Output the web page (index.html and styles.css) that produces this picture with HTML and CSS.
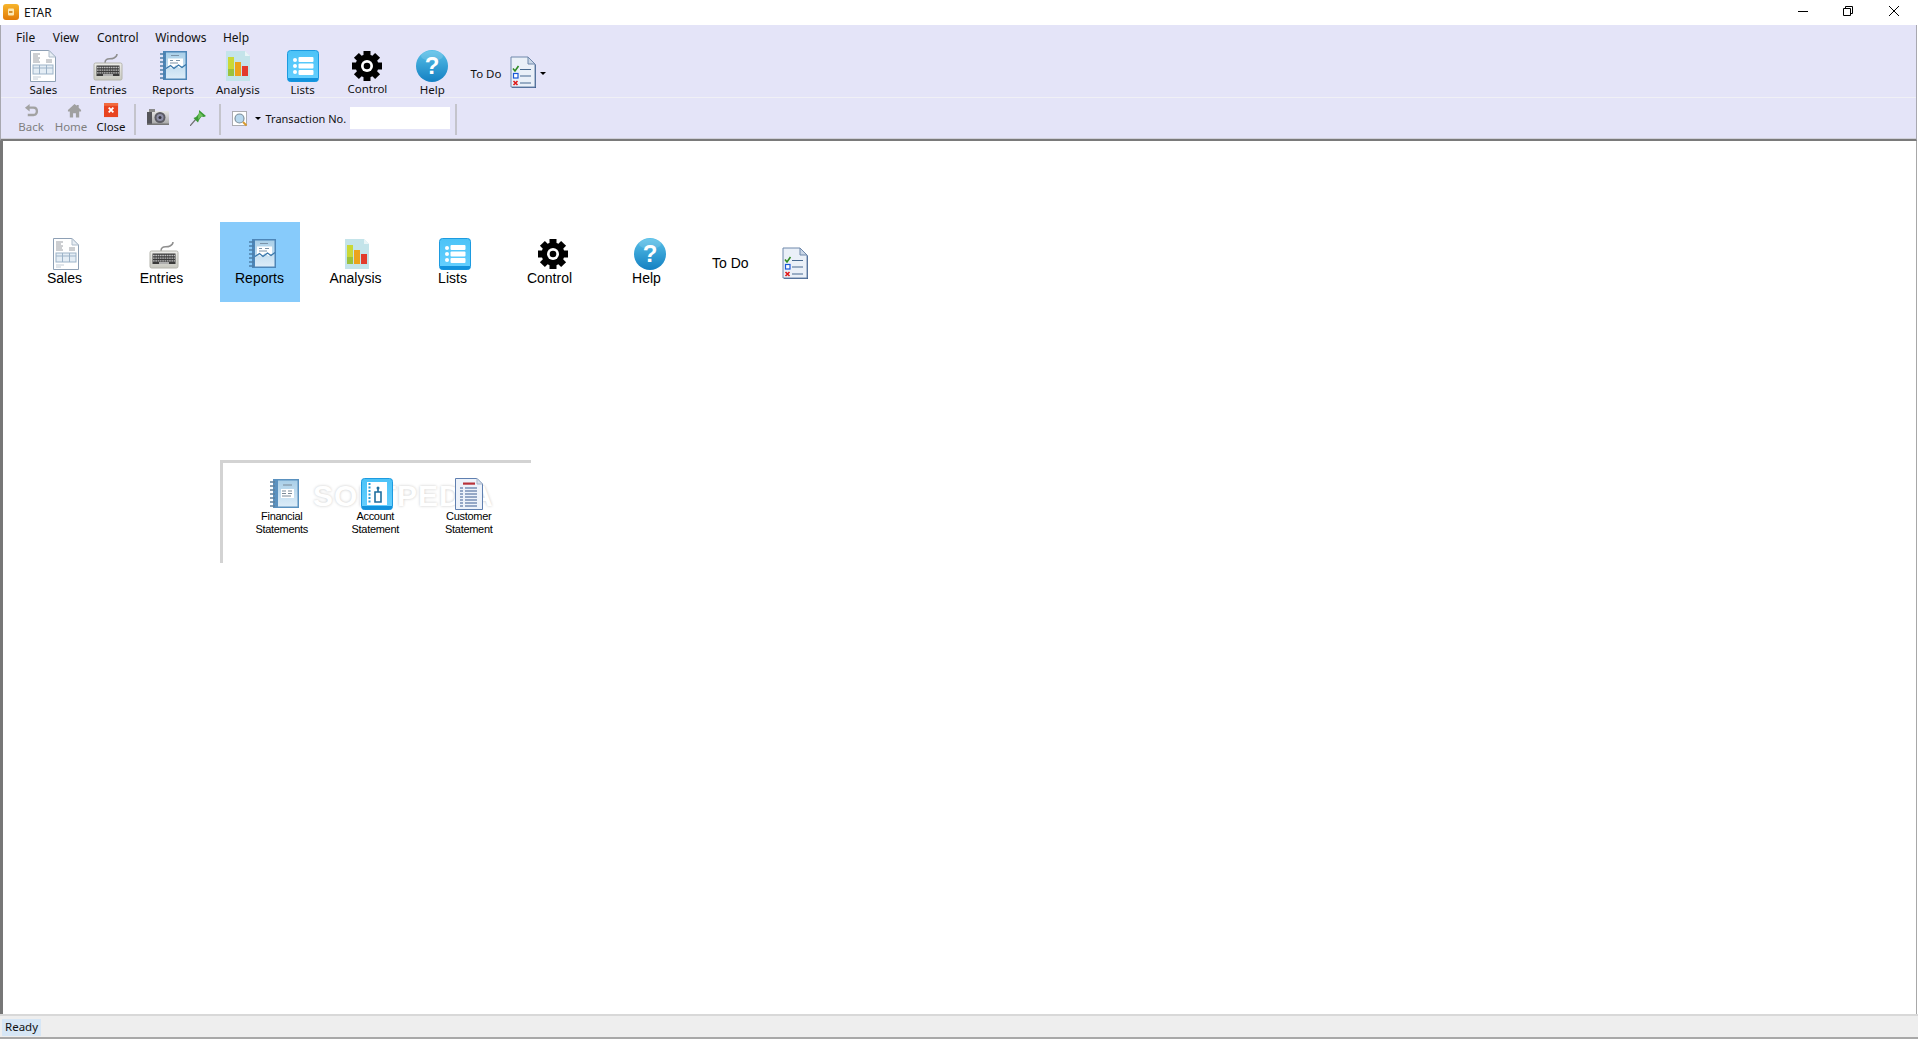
FILE: index.html
```html
<!DOCTYPE html>
<html lang="en">
<head>
<meta charset="utf-8">
<title>ETAR</title>
<link rel="stylesheet" href="styles.css">
</head>
<body>
<svg class="defs" aria-hidden="true">
  <defs>
    <linearGradient id="gOrange" x1="0" y1="0" x2="0" y2="1"><stop offset="0" stop-color="#f7b52c"/><stop offset="1" stop-color="#e27a06"/></linearGradient>
    <linearGradient id="gBook" x1="0" y1="0" x2="0" y2="1"><stop offset="0" stop-color="#a9cfe8"/><stop offset="1" stop-color="#dcecf8"/></linearGradient>
    <linearGradient id="gList" x1="0" y1="0" x2="0" y2="1"><stop offset="0" stop-color="#4cc3f7"/><stop offset="1" stop-color="#66d0ff"/></linearGradient>
    <linearGradient id="gHelp" x1="0" y1="0" x2="0" y2="1"><stop offset="0" stop-color="#58c0e8"/><stop offset="1" stop-color="#1380c2"/></linearGradient>
    <linearGradient id="gKey" x1="0" y1="0" x2="0" y2="1"><stop offset="0" stop-color="#eeeeea"/><stop offset="1" stop-color="#c8c8c0"/></linearGradient>
    <linearGradient id="gCam" x1="0" y1="0" x2="0" y2="1"><stop offset="0" stop-color="#e6e6e6"/><stop offset="1" stop-color="#a4a4a4"/></linearGradient>

    <symbol id="iSales" viewBox="0 0 32 32">
      <path d="M3.5.5H22L28.500 7V31.500H3.500Z" fill="#fff" stroke="#8ea0b5"/>
      <path d="M22 .5V7H28.500Z" fill="#e8eef4" stroke="#aebccb"/>
      <path d="M6 4h7M6 6h5M6 8h7M6 10h6M6 12h7M19 10h6M19 12h6" stroke="#9a9ea4" fill="none"/>
      <rect x="6" y="15" width="20" height="9" fill="#e4edf5" stroke="#9db3c8"/>
      <path d="M6 18h20M12.500 15v9M19.500 15v9" stroke="#9db3c8" fill="none"/>
      <path d="M6 27h8M6 29h5" stroke="#c2ccd6" fill="none"/>
    </symbol>

    <symbol id="iEntries" viewBox="0 0 32 32">
      <path d="M13 13c0-6 5-3 9-5 2-1 3-2 3-4" fill="none" stroke="#8f8f8f" stroke-width="1.500"/>
      <rect x="2" y="13" width="28" height="17" rx="1.500" fill="url(#gKey)" stroke="#b4b4ac"/>
      <rect x="4.500" y="15.500" width="23" height="10.500" fill="#3a3a3a"/>
      <path d="M5 17.500h22M5 20.200h22M5 22.900h22" stroke="#bdbdbd" stroke-width="1.300" stroke-dasharray="1.700 .6" fill="none"/>
      <path d="M11 25h10" stroke="#d6d6d6" stroke-width="1.500"/>
    </symbol>

    <symbol id="iReports" viewBox="0 0 32 32">
      <rect x="6" y="1" width="24" height="29" fill="#4d86b8"/>
      <rect x="9" y="2.500" width="19.500" height="26" fill="url(#gBook)"/>
      <path d="M11 8.500H26V15.500L22.500 18 19 15 15 18.500 11 16Z" fill="#fff"/>
      <path d="M9 18.500l4.500-3 3.500 3 4.500-3.500 3.500 2.500 4-3" fill="none" stroke="#3a78ac" stroke-width="1.300"/>
      <path d="M14 5.500h8M13 10.500h3M19 10.500h4M13 13h8" stroke="#7b93a8" fill="none"/>
      <path d="M3 4h5M3 8h5M3 12h5M3 16h5M3 20h5M3 24h5M3 28h5" stroke="#4d7fa8" stroke-width="1.400" fill="none"/>
    </symbol>

    <symbol id="iAnalysis" viewBox="0 0 32 32">
      <path d="M4 1H23L28 6V31H4Z" fill="#c4e4ea"/>
      <path d="M23 1V6H28Z" fill="#eaf5f7"/>
      <rect x="6" y="7" width="6" height="19" fill="#cad836"/>
      <rect x="6" y="19" width="6" height="7" fill="#9cc23c"/>
      <rect x="13" y="12" width="6" height="14" fill="#eca31c"/>
      <rect x="20" y="16" width="6" height="10" fill="#e23b2c"/>
    </symbol>

    <symbol id="iLists" viewBox="0 0 32 32">
      <rect x=".5" y=".5" width="31" height="31" rx="3" fill="url(#gList)" stroke="#1d9be0"/>
      <path d="M1 28h30v1.500a2 2 0 0 1-2 2H3a2 2 0 0 1-2-2Z" fill="#1292dc"/>
      <circle cx="8" cy="10" r="2" fill="#fff"/>
      <circle cx="8" cy="16" r="2" fill="#fff"/>
      <circle cx="8" cy="22" r="2" fill="#fff"/>
      <rect x="11.500" y="7" width="15" height="5" rx="1" fill="#fff"/>
      <rect x="11.500" y="13.500" width="15" height="5" rx="1" fill="#fff"/>
      <rect x="11.500" y="20" width="15" height="5" rx="1" fill="#fff"/>
    </symbol>

    <symbol id="iGear" viewBox="0 0 32 32">
      <g fill="#000">
        <rect x="12.500" y="1" width="7" height="30"/>
        <rect x="12.500" y="1" width="7" height="30" transform="rotate(45 16 16)"/>
        <rect x="12.500" y="1" width="7" height="30" transform="rotate(90 16 16)"/>
        <rect x="12.500" y="1" width="7" height="30" transform="rotate(135 16 16)"/>
        <circle cx="16" cy="16" r="11.500"/>
      </g>
      <circle cx="16" cy="16" r="6" fill="#fff"/>
      <circle cx="16" cy="16" r="3.300" fill="#000"/>
    </symbol>

    <symbol id="iHelp" viewBox="0 0 32 32">
      <circle cx="16" cy="16" r="16" fill="url(#gHelp)"/>
      <ellipse cx="16" cy="6" rx="11" ry="5" fill="#fff" opacity=".15"/>
      <text x="16" y="24" text-anchor="middle" class="help-mark">?</text>
    </symbol>

    <symbol id="iTodo" viewBox="0 0 27 33">
      <path d="M2 2H19L26 9V32H2Z" fill="#3f5f8f"/>
      <path d="M1 1H18L25 8V31H1Z" fill="#eaf0f8" stroke="#6f88ab"/>
      <path d="M18 1V8H25Z" fill="#c9d6e6" stroke="#6f88ab"/>
      <path d="M3 12.500l2 2.500 3.500-5" fill="none" stroke="#2e8b22" stroke-width="1.600"/>
      <rect x="3.500" y="17.500" width="4.500" height="4.500" fill="#fff" stroke="#1a58d8" stroke-width="1.200"/>
      <path d="M3.500 25l4 4M7.500 25l-4 4" stroke="#e01818" stroke-width="1.600"/>
      <path d="M10 13.500h11M10 20h11M10 27h11" stroke="#47698f" stroke-width="1.200"/>
    </symbol>

    <symbol id="iBack" viewBox="0 0 16 16">
      <path d="M1 5l5-4v2.700h4.500c3 0 4.500 2 4.500 5s-2 5.300-5 5.300H4v-2.500h6c1.500 0 2.500-1 2.500-2.800s-1-2.500-2.500-2.500H6V9Z" fill="#a2a2a2"/>
    </symbol>
    <symbol id="iHome" viewBox="0 0 16 16">
      <path d="M8 1 1 7.500V9h2v6.500h3.500V11h3v4.500H13V9h2V7.500L12.500 5V2h-2v1Z" fill="#a0a0a0"/>
    </symbol>
    <symbol id="iClose" viewBox="0 0 16 16">
      <rect width="15" height="15" fill="#e8431f"/>
      <rect width="15" height="3" fill="#f26a3e"/>
      <path d="M5 5l5 5M10 5l-5 5" stroke="#fff" stroke-width="2"/>
    </symbol>
    <symbol id="iCam" viewBox="0 0 22 16">
      <rect x="0" y="2" width="22" height="14" rx="1" fill="url(#gCam)"/>
      <rect x="0" y="3" width="5" height="12" fill="#55555a"/>
      <rect x="2" y="0" width="6" height="3" fill="#8a8a8a"/>
      <rect x="0" y="14.500" width="22" height="1.500" fill="#777"/>
      <circle cx="13" cy="8.500" r="5.500" fill="#5c5c64"/>
      <circle cx="13" cy="8.500" r="3.500" fill="#8f90a8"/>
      <circle cx="13" cy="8.500" r="1.500" fill="#34343c"/>
    </symbol>
    <symbol id="iPin" viewBox="0 0 16 16">
      <path d="M0 16 6 9" stroke="#707070" stroke-width="1.200"/>
      <path d="M9 0l7 6-2 1-2.500-.5L9 10 8 12.500 3.500 8 6 7l3-3.500Z" fill="#3a9a35"/>
      <path d="M9 2l4 3.500-2 1-2.500 3L8 7Z" fill="#6fc35e"/>
    </symbol>
    <symbol id="iSearch" viewBox="0 0 16 16">
      <rect x=".5" y=".5" width="14" height="14" fill="#fff" stroke="#666" stroke-dasharray="1 1"/>
      <circle cx="7.500" cy="7.500" r="4.500" fill="#b8d8ee" stroke="#7e8f9c" stroke-width="1.200"/>
      <path d="M11 11l3.500 3.500" stroke="#d99a2e" stroke-width="2"/>
    </symbol>
    <symbol id="iApp" viewBox="0 0 16 16">
      <rect width="16" height="16" rx="3" fill="url(#gOrange)"/>
      <rect x="5" y="4.500" width="6" height="7" rx="1" fill="#fde9b4"/>
      <path d="M6 8h3.500" stroke="#c67306" stroke-width="1.500"/>
    </symbol>

    <symbol id="iFin" viewBox="0 0 32 32">
      <rect x="5" y="1" width="26" height="29" fill="#5a91bf"/>
      <rect x="10" y="2.500" width="19.500" height="26" fill="url(#gBook)"/>
      <rect x="13" y="11" width="13" height="9" fill="#fff"/>
      <path d="M15 7h9M14 13h4M20 13h4M14 15.500h4M20 15.500h4M14 18h9" stroke="#7b8a98" fill="none"/>
      <path d="M2 4h5M2 8h5M2 12h5M2 16h5M2 20h5M2 24h5M2 28h5" stroke="#5c7f9c" stroke-width="1.400" fill="none"/>
    </symbol>
    <symbol id="iAccount" viewBox="0 0 32 32">
      <rect x=".5" y=".5" width="31" height="31" rx="3" fill="url(#gList)" stroke="#1d9be0"/>
      <path d="M1 28h30v1.500a2 2 0 0 1-2 2H3a2 2 0 0 1-2-2Z" fill="#1292dc"/>
      <rect x="6" y="4" width="20" height="23" fill="#fff"/>
      <path d="M8.500 5v21" stroke="#2b9bd8" stroke-width="2" stroke-dasharray="2 1.500"/>
      <path d="M14 14h6v10h-6ZM17 10v4" fill="none" stroke="#1f6e9e" stroke-width="1.600"/>
      <circle cx="17" cy="10" r="1.500" fill="#1f6e9e"/>
    </symbol>
    <symbol id="iCust" viewBox="0 0 28 32">
      <path d="M.5.5H22L27.500 6V31.500H.5Z" fill="#edf2fa" stroke="#5f7fb0"/>
      <path d="M22 .5V6H27.500Z" fill="#dbe3ef" stroke="#a8b6cb"/>
      <rect x="8" y="4.500" width="12" height="2.200" fill="#b8323a"/>
      <path d="M5 10h3M10 10h12M5 13h3M10 13h12M5 16h3M10 16h12M5 19h3M10 19h12M5 22h3M10 22h12M5 25h3M10 25h12M5 28h3M10 28h12" stroke="#3d5c92" stroke-width="1.200" fill="none"/>
    </symbol>
  </defs>
</svg>

<div class="window">
  <header class="titlebar">
    <svg class="ico-app"><use href="#iApp"/></svg>
    <span class="title">ETAR</span>
    <div class="win-controls">
      <svg class="wc wc-min" viewBox="0 0 10 10"><path d="M0 5.500H10" stroke="#000" fill="none"/></svg>
      <svg class="wc wc-max" viewBox="0 0 10 10"><path d="M.5 2.500h7v7h-7ZM2.500 2.500v-2h7v7h-2" stroke="#000" fill="none"/></svg>
      <svg class="wc wc-close" viewBox="0 0 10 10"><path d="M0 0 10 10M10 0 0 10" stroke="#000" fill="none"/></svg>
    </div>
  </header>

  <div class="chrome">
    <nav class="menubar">
      <span class="menu-file">File</span>
      <span class="menu-view">View</span>
      <span class="menu-control">Control</span>
      <span class="menu-windows">Windows</span>
      <span class="menu-help">Help</span>
    </nav>
    <div class="bigbar">
      <div class="bb-item"><svg class="ico32"><use href="#iSales"/></svg><span>Sales</span></div>
      <div class="bb-item"><svg class="ico32"><use href="#iEntries"/></svg><span>Entries</span></div>
      <div class="bb-item"><svg class="ico32"><use href="#iReports"/></svg><span>Reports</span></div>
      <div class="bb-item"><svg class="ico32"><use href="#iAnalysis"/></svg><span>Analysis</span></div>
      <div class="bb-item"><svg class="ico32"><use href="#iLists"/></svg><span>Lists</span></div>
      <div class="bb-item bb-raised"><svg class="ico32"><use href="#iGear"/></svg><span>Control</span></div>
      <div class="bb-item"><svg class="ico32"><use href="#iHelp"/></svg><span>Help</span></div>
      <span class="bb-todo">To Do</span>
      <svg class="ico-todo"><use href="#iTodo"/></svg>
      <span class="caret bb-caret"></span>
    </div>
    <div class="smallbar">
      <div class="sb-item sb-off"><svg class="ico15"><use href="#iBack"/></svg><span>Back</span></div>
      <div class="sb-item sb-off sb-home"><svg class="ico15"><use href="#iHome"/></svg><span>Home</span></div>
      <div class="sb-item"><svg class="ico15"><use href="#iClose"/></svg><span>Close</span></div>
      <i class="sep sep-1"></i>
      <div class="sb-tool sb-tool-first"><svg class="ico-cam"><use href="#iCam"/></svg></div>
      <div class="sb-tool"><svg class="ico-pin"><use href="#iPin"/></svg></div>
      <i class="sep sep-2"></i>
      <svg class="ico-search"><use href="#iSearch"/></svg>
      <span class="caret sb-caret"></span>
      <label class="txn-label">Transaction No.</label>
      <span class="txn-input"></span>
      <i class="sep sep-3"></i>
    </div>
  </div>

  <main class="content">
    <section class="launch">
      <div class="la-item"><svg class="ico32 nudge-2"><use href="#iSales"/></svg><span>Sales</span></div>
      <div class="la-item"><svg class="ico32 nudge-3"><use href="#iEntries"/></svg><span>Entries</span></div>
      <div class="la-item la-active"><svg class="ico32 nudge-3"><use href="#iReports"/></svg><span>Reports</span></div>
      <div class="la-item"><svg class="ico32 nudge-2"><use href="#iAnalysis"/></svg><span>Analysis</span></div>
      <div class="la-item"><svg class="ico32 nudge-3"><use href="#iLists"/></svg><span>Lists</span></div>
      <div class="la-item"><svg class="ico32 nudge-4"><use href="#iGear"/></svg><span>Control</span></div>
      <div class="la-item"><svg class="ico32 nudge-4"><use href="#iHelp"/></svg><span>Help</span></div>
      <span class="la-todo">To Do</span>
      <svg class="ico-todo la-todo-icon"><use href="#iTodo"/></svg>
    </section>

    <section class="subpanel">
      <div class="watermark">SOFTPEDIA</div>
      <div class="sp-item"><svg class="ico32 sp-nudge"><use href="#iFin"/></svg><span>Financial<br>Statements</span></div>
      <div class="sp-item"><svg class="ico32 sp-nudge"><use href="#iAccount"/></svg><span>Account<br>Statement</span></div>
      <div class="sp-item"><svg class="ico-cust"><use href="#iCust"/></svg><span>Customer<br>Statement</span></div>
    </section>
  </main>

  <footer class="statusbar"><span class="ready">Ready</span></footer>
</div>
</body>
</html>
```
FILE: styles.css
```css
* { box-sizing: border-box; }
html, body { margin: 0; height: 100%; overflow: hidden; background: #fff; }
body { font-family: "Noto Sans", "Liberation Sans", sans-serif; font-size: 11.5px; color: #111; }
.defs { position: absolute; width: 0; height: 0; }
.help-mark { font: bold 24px "Liberation Sans", sans-serif; fill: #fff; }

.window { display: flex; flex-direction: column; height: 1039px; width: 1918px; }

/* title bar */
.titlebar { display: flex; align-items: center; height: 25px; padding-left: 3px; flex: none; }
.ico-app { width: 16px; height: 16px; margin-top: -1px; }
.title { margin-left: 5px; font-size: 12px; margin-top: -1px; }
.win-controls { display: flex; margin-left: auto; align-items: center; }
.wc { width: 10px; height: 10px; margin-top: -3px; }
.wc-max { margin-left: 35px; }
.wc-close { margin-left: 36px; margin-right: 19px; }

/* chrome */
.chrome { flex: none; width: 1917px; background: #e4e4f8; border-left: 1px solid #a8a8b0; border-right: 1px solid #a8a8b0; border-bottom: 2px solid #7a7a7a; box-shadow: inset 0 -1px 0 #cfcfd8; }
.menubar { display: flex; height: 25px; align-items: center; padding-left: 15px; font-size: 12px; }
.menu-view { margin-left: 17.500px; }
.menu-control { margin-left: 18px; }
.menu-windows { margin-left: 16.500px; }
.menu-help { margin-left: 16.500px; }

.bigbar { display: flex; height: 48px; padding-left: 10px; border-bottom: 1px solid #f0f0f6; align-items: flex-start; }
.bb-item { display: flex; flex-direction: column; align-items: center; width: 64.800px; flex: none; }
.bb-item span { line-height: 14px; margin-top: 1px; white-space: nowrap; }
.bb-raised span { margin-top: 0; }
.ico32 { width: 32px; height: 32px; display: block; flex: none; }
.bb-todo { margin-left: 6px; align-self: center; white-space: nowrap; margin-top: -1px; width: 39px; }
.ico-todo { width: 27px; height: 33px; display: block; flex: none; }
.bigbar .ico-todo { margin-top: 6px; }
.caret { display: block; width: 0; height: 0; border-left: 3px solid transparent; border-right: 3px solid transparent; border-top: 3px solid #000; flex: none; }
.bb-caret { margin-left: 3px; margin-top: 22px; }

.smallbar { display: flex; height: 41px; padding: 5px 0 0 10px; align-items: flex-start; }
.sb-item { display: flex; flex-direction: column; align-items: center; width: 40px; flex: none; }
.sb-item span { line-height: 14px; margin-top: 2px; }
.sb-off span { color: #7f7f7f; }
.sb-home .ico15 { margin-left: 6px; }
.ico15 { width: 15px; height: 15px; display: block; }
.sep { display: block; width: 2px; height: 31px; margin-top: 1px; flex: none; background: #c4c4cc; }
.sep-1 { margin-left: 3px; }
.sb-tool { width: 40px; flex: none; display: flex; justify-content: center; }
.sb-tool-first { margin-left: 2px; }
.ico-cam { width: 22px; height: 16px; margin-top: 6px; }
.ico-pin { width: 16px; height: 16px; margin-top: 7px; }
.sep-2 { margin-left: 1px; }
.ico-search { width: 16px; height: 16px; margin: 8px 0 0 11px; flex: none; }
.sb-caret { margin: 14px 0 0 7px; }
.txn-label { margin: 9px 0 0 4.500px; width: 84px; line-height: 14px; white-space: nowrap; font-size: 11px; }
.txn-input { width: 100px; height: 22px; background: #fff; margin-top: 4px; flex: none; }
.sep-3 { margin-left: 5px; }

/* content */
.content { flex: 1; min-height: 0; width: 1917px; border-left: 3px solid #777; border-right: 1px solid #a8a8a8; padding: 81px 0 0 22px; background: #fff; }
.launch { display: flex; height: 80px; align-items: flex-start; font-family: "Liberation Sans", sans-serif; font-size: 14px; color: #000; }
.la-item { display: flex; flex-direction: column; align-items: center; width: 80px; height: 80px; margin-right: 17px; padding-top: 16px; flex: none; }
.la-item span { line-height: 16px; margin-right: 1px; }
.la-active { background: #87cbfb; margin-left: 1px; margin-right: 16px; }
.nudge-2 { margin-left: 2px; }
.nudge-3 { margin-left: 3px; }
.nudge-4 { margin-left: 5px; }
.la-todo { margin-left: 8px; margin-top: 33px; width: 70px; line-height: 16px; }
.la-todo-icon { margin-top: 25px; }

.subpanel { position: relative; display: flex; margin: 158px 0 0 195px; width: 311px; height: 103px; border-top: 3px solid #d3d3d3; border-left: 3px solid #d3d3d3; padding: 15px 0 0 12px; font-family: "Liberation Sans", sans-serif; font-size: 11px; letter-spacing: -.3px; color: #000; }
.sp-item { display: flex; flex-direction: column; align-items: center; width: 93.500px; position: relative; flex: none; }
.sp-item span { text-align: center; line-height: 13px; }
.sp-nudge { margin-left: 4px; }
.ico-cust { width: 28px; height: 32px; display: block; margin-left: 1px; flex: none; }
.watermark { position: absolute; left: 90px; top: 22px; font: bold 30px/22px "Liberation Sans", sans-serif; letter-spacing: 1px; color: #fff; text-shadow: 0 0 3px rgba(0,0,0,.22); white-space: nowrap; }

/* status bar */
.statusbar { flex: none; height: 25px; border-top: 2px solid #d8d8d8; border-bottom: 2px solid #a8a8a8; background: #eee; padding: 3px 0 0 2px; }
.ready { display: block; width: 39px; height: 17px; background: #d6e6f5; padding-left: 3px; font-size: 11.5px; line-height: 16px; }
```
